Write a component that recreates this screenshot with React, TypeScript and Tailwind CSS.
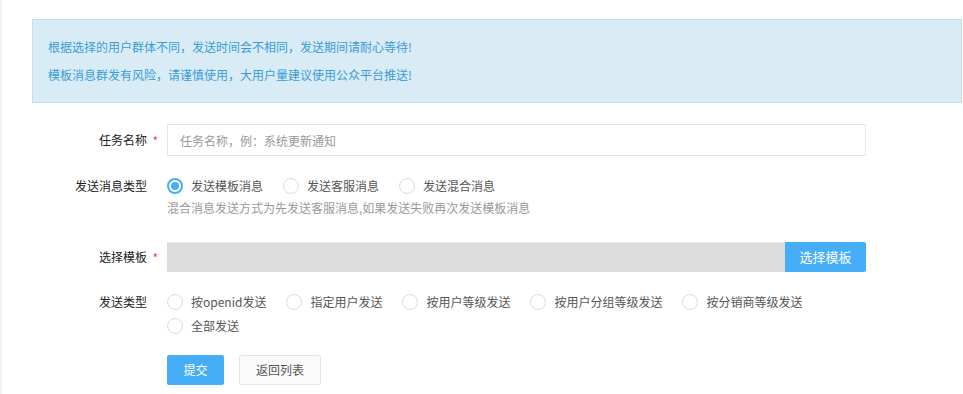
import React from "react";

const font = { fontFamily: '"Noto Sans CJK SC", "Noto Sans", sans-serif' };

function Radio({ checked, label }: { checked?: boolean; label: string }) {
  return (
    <label className="mr-[20px] flex h-[24px] items-center whitespace-nowrap">
      {checked ? (
        <span className="flex h-[16px] w-[16px] items-center justify-center rounded-full border-2 border-[#46aef7] bg-white">
          <span className="h-[8px] w-[8px] rounded-full bg-[#46aef7]" />
        </span>
      ) : (
        <span className="h-[16px] w-[16px] rounded-full border border-[#dcdcdc] bg-white" />
      )}
      <span className="ml-[8px] text-[#555]">{label}</span>
    </label>
  );
}

function Label({ text, required }: { text: string; required?: boolean }) {
  return (
    <div className="relative w-[115px] shrink-0 text-right text-[#222]">
      {text}
      {required && <span className="absolute -right-[11px] top-[1px] text-[#e04b4b]">*</span>}
    </div>
  );
}

export default function App() {
  return (
    <div className="flex min-h-[394px] bg-white text-[12px]" style={font}>
      <div className="w-[2px] shrink-0 bg-[#f2f2f2]" />
      <div className="flex-1 pl-[30px] pr-[1px] pt-[19px]">
        <div className="border border-[#c3dfec] bg-[#d9ecf6] px-[15px] py-[13px] leading-[28px] text-[#3a9bd8]">
          <div>根据选择的用户群体不同，发送时间会不相同，发送期间请耐心等待!</div>
          <div>模板消息群发有风险，请谨慎使用，大用户量建议使用公众平台推送!</div>
        </div>

        <div className="w-[834px]">
          <div className="mt-[21px] flex items-center">
            <Label text="任务名称" required />
            <input
              className="ml-[20px] h-[32px] flex-1 border border-[#e6e6e6] px-[12px] text-[#333] outline-none placeholder:text-[#999]"
              placeholder="任务名称，例：系统更新通知"
              style={font}
            />
          </div>

          <div className="mt-[20px] flex">
            <div className="leading-[20px]">
              <Label text="发送消息类型" />
            </div>
            <div className="ml-[20px] flex-1">
              <div className="flex h-[20px] items-center">
                <Radio checked label="发送模板消息" />
                <Radio label="发送客服消息" />
                <Radio label="发送混合消息" />
              </div>
              <div className="mt-[2px] leading-[20px] text-[#999]">
                混合消息发送方式为先发送客服消息,如果发送失败再次发送模板消息
              </div>
            </div>
          </div>

          <div className="mt-[24px] flex items-center">
            <Label text="选择模板" required />
            <div className="ml-[20px] flex h-[30px] flex-1">
              <div className="flex-1 border-t border-[#e8e8e8] bg-[#dcdcdc]" />
              <button className="w-[81px] rounded-r-[2px] bg-[#46aef7] text-[13px] text-white">选择模板</button>
            </div>
          </div>

          <div className="mt-[18px] flex">
            <div className="leading-[24px]">
              <Label text="发送类型" />
            </div>
            <div className="ml-[20px] flex flex-1 flex-wrap">
              <Radio label="按openid发送" />
              <Radio label="指定用户发送" />
              <Radio label="按用户等级发送" />
              <Radio label="按用户分组等级发送" />
              <Radio label="按分销商等级发送" />
              <Radio label="全部发送" />
            </div>
          </div>

          <div className="mt-[17px] flex pl-[135px]">
            <button className="h-[30px] w-[57px] rounded-[2px] bg-[#46aef7] text-white">提交</button>
            <button className="ml-[15px] h-[30px] w-[82px] rounded-[2px] border border-[#e6e6e6] bg-[#fafafa] text-[#555]">
              返回列表
            </button>
          </div>
        </div>
      </div>
    </div>
  );
}
